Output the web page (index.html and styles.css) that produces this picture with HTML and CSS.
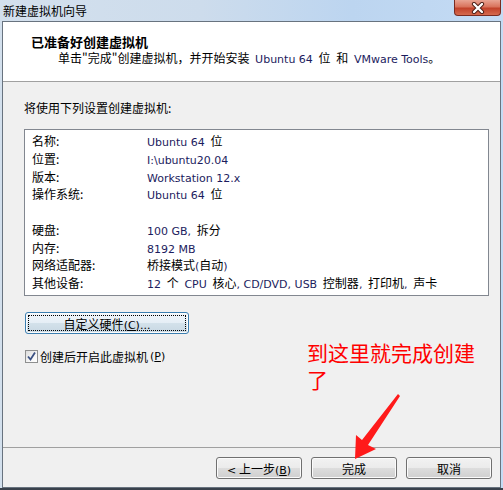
FILE: index.html
```html
<!DOCTYPE html>
<html lang="zh-CN">

<head>
    <meta charset="UTF-8">
    <title>新建虚拟机向导</title>
    <link rel="stylesheet" href="styles.css">
</head>

<body>
    <div class="window">
        <!-- Title bar -->
        <div class="titlebar">
            <span class="title">新建虚拟机向导</span>
            <div class="close">
                <svg width="20" height="12" viewBox="0 0 20 12">
                    <path d="M6 2 L14 10 M14 2 L6 10" stroke="#4a1c14" stroke-width="4.2" stroke-linecap="round" />
                    <path d="M6 2 L14 10 M14 2 L6 10" stroke="#fff" stroke-width="2.4" stroke-linecap="round" />
                </svg>
            </div>
        </div>

        <div class="dialog">
            <!-- Wizard header -->
            <div class="header">
                <div class="head-title">已准备好创建虚拟机</div>
                <div class="head-sub">单击"完成"创建虚拟机，并开始安装 <span class="en">Ubuntu 64</span> 位 和 <span class="en">VMware Tools</span>。</div>
            </div>

            <!-- Summary -->
            <div class="content">
                <p class="intro">将使用下列设置创建虚拟机:</p>
                <div class="summary">
                    <div class="row"><span class="label">名称:</span><span class="value"><span class="en">Ubuntu 64</span> 位</span></div>
                    <div class="row"><span class="label">位置:</span><span class="value"><span class="en">I:\ubuntu20.04</span></span></div>
                    <div class="row"><span class="label">版本:</span><span class="value"><span class="en">Workstation 12.x</span></span></div>
                    <div class="row"><span class="label">操作系统:</span><span class="value"><span class="en">Ubuntu 64</span> 位</span></div>
                    <div class="row"></div>
                    <div class="row"><span class="label">硬盘:</span><span class="value"><span class="en">100 GB,</span> 拆分</span></div>
                    <div class="row"><span class="label">内存:</span><span class="value"><span class="en">8192 MB</span></span></div>
                    <div class="row"><span class="label">网络适配器:</span><span class="value">桥接模式<span class="en">(</span>自动<span class="en">)</span></span></div>
                    <div class="row"><span class="label">其他设备:</span><span class="value"><span class="en">12</span> 个 <span class="en">CPU</span> 核心<span class="en">, CD/DVD, USB</span> 控制器<span class="en">,</span> 打印机<span class="en">,</span> 声卡</span></div>
                </div>

                <button class="btn btn-focus">自定义硬件<span class="en">(<u>C</u>)...</span></button>

                <label class="check">
                    <span class="box">
                        <svg width="11" height="11" viewBox="0 0 11 11">
                            <path d="M2 5.5 L4.5 8.5 L9 1.5" fill="none" stroke="#3b5183" stroke-width="1.8" />
                        </svg>
                    </span>
                    创建后开启此虚拟机<span class="en">(<u>P</u>)</span>
                </label>

                <!-- Annotation -->
                <div class="note">到这里就完成创建了</div>
            </div>

            <!-- Buttons -->
            <div class="footer">
                <button class="btn"><span class="en">&lt;</span> 上一步<span class="en">(<u>B</u>)</span></button>
                <button class="btn">完成</button>
                <button class="btn">取消</button>
            </div>
        </div>

        <svg class="arrow" width="70" height="80" viewBox="0 0 70 80">
            <polygon points="58,9 60,11 28,60 36,64 15,74 16,50 22,55" fill="#ff1a1a" />
        </svg>
    </div>
</body>

</html>
```

FILE: styles.css
```css
/* Reset */

* {
    margin: 0;
    padding: 0;
    box-sizing: border-box;
}

body {
    width: 503px;
    height: 490px;
    overflow: hidden;
    font-family: "Noto Sans CJK SC", sans-serif;
    font-size: 12px;
    color: #000;
    background-color: #39414c;
}

/* Latin runs use a Tahoma-like face */

.en {
    font-family: "DejaVu Sans", sans-serif;
    font-size: 11px;
    color: #1c1c5e;
    word-spacing: 0;
}

/* Window frame */

.window {
    position: relative;
    height: 488px;
    display: flex;
    flex-direction: column;
    padding: 0 2px;
    background: linear-gradient(to right, #d3e0ed 0%, #cddcec 40%, #bcd5f0 70%, #c4dbf4 100%);
}

.titlebar {
    height: 21px;
    display: flex;
    align-items: center;
    justify-content: space-between;
    padding-left: 1px;
}

.close {
    align-self: flex-start;
    width: 47px;
    height: 16px;
    display: flex;
    align-items: center;
    justify-content: center;
    border: 1px solid #7a2b20;
    border-top: none;
    border-radius: 0 0 4px 4px;
    background: linear-gradient(to bottom, #e9a493 0%, #d9735c 45%, #c2422a 55%, #d56a4e 100%);
}

/* Dialog body */

.dialog {
    flex: 1;
    display: flex;
    flex-direction: column;
    border: 1px solid #68737f;
    background-color: #f0f0f0;
}

.header {
    height: 60px;
    padding: 12px 0 0 28px;
    background-color: #fff;
    border-bottom: 1px solid #a0a0a0;
    line-height: 16px;
}

.head-title {
    font-size: 13px;
    font-weight: bold;
}

.head-sub {
    padding-left: 27px;
    word-spacing: 3px;
}

.content {
    flex: 1;
    position: relative;
    padding: 18px 11px 0 21px;
}

.intro {
    line-height: 16px;
}

/* Settings list box */

.summary {
    width: 465px;
    height: 167px;
    margin-top: 13px;
    padding: 2px 0 0 7px;
    background-color: #fff;
    border: 1px solid #828790;
}

.row {
    display: flex;
    height: 17.75px;
    line-height: 17.75px;
    white-space: nowrap;
}

.label {
    width: 115px;
}

.value {
    word-spacing: 3px;
}

/* Buttons */

.btn {
    width: 86px;
    height: 22px;
    font-family: inherit;
    font-size: 12px;
    color: #000;
    border: 1px solid #707070;
    border-radius: 3px;
    background: linear-gradient(to bottom, #f2f2f2 0%, #ebebeb 50%, #dddddd 51%, #cfcfcf 100%);
    box-shadow: inset 0 0 0 1px #fbfbfb;
}

.btn .en {
    color: #000;
}

.btn-focus {
    width: 164px;
    margin: 16px 0 0 1px;
    border-color: #3c7fb1;
    background: linear-gradient(to bottom, #f1f6fa 0%, #e5eef5 50%, #d3e1ea 51%, #c8d8e3 100%);
    outline: 1px dotted #000;
    outline-offset: -4px;
}

.check {
    display: flex;
    align-items: center;
    gap: 2px;
    height: 16px;
    margin: 14px 0 0 1px;
}

.check .en {
    color: #000;
}

.box {
    width: 13px;
    height: 13px;
    display: flex;
    align-items: center;
    justify-content: center;
    border: 1px solid #8e8f8f;
    background: linear-gradient(135deg, #dcdcdc 0%, #f6f6f6 60%, #fff 100%);
}

/* Red annotation over the page */

.note {
    position: absolute;
    left: 304px;
    top: 257px;
    width: 178px;
    font-size: 21px;
    line-height: 27px;
    color: #ff0000;
}

.arrow {
    position: absolute;
    left: 340px;
    top: 385px;
}

.footer {
    display: flex;
    justify-content: flex-end;
    gap: 9px;
    padding: 9px 8px 8px 0;
    border-top: 1px solid #a0a0a0;
}
```
